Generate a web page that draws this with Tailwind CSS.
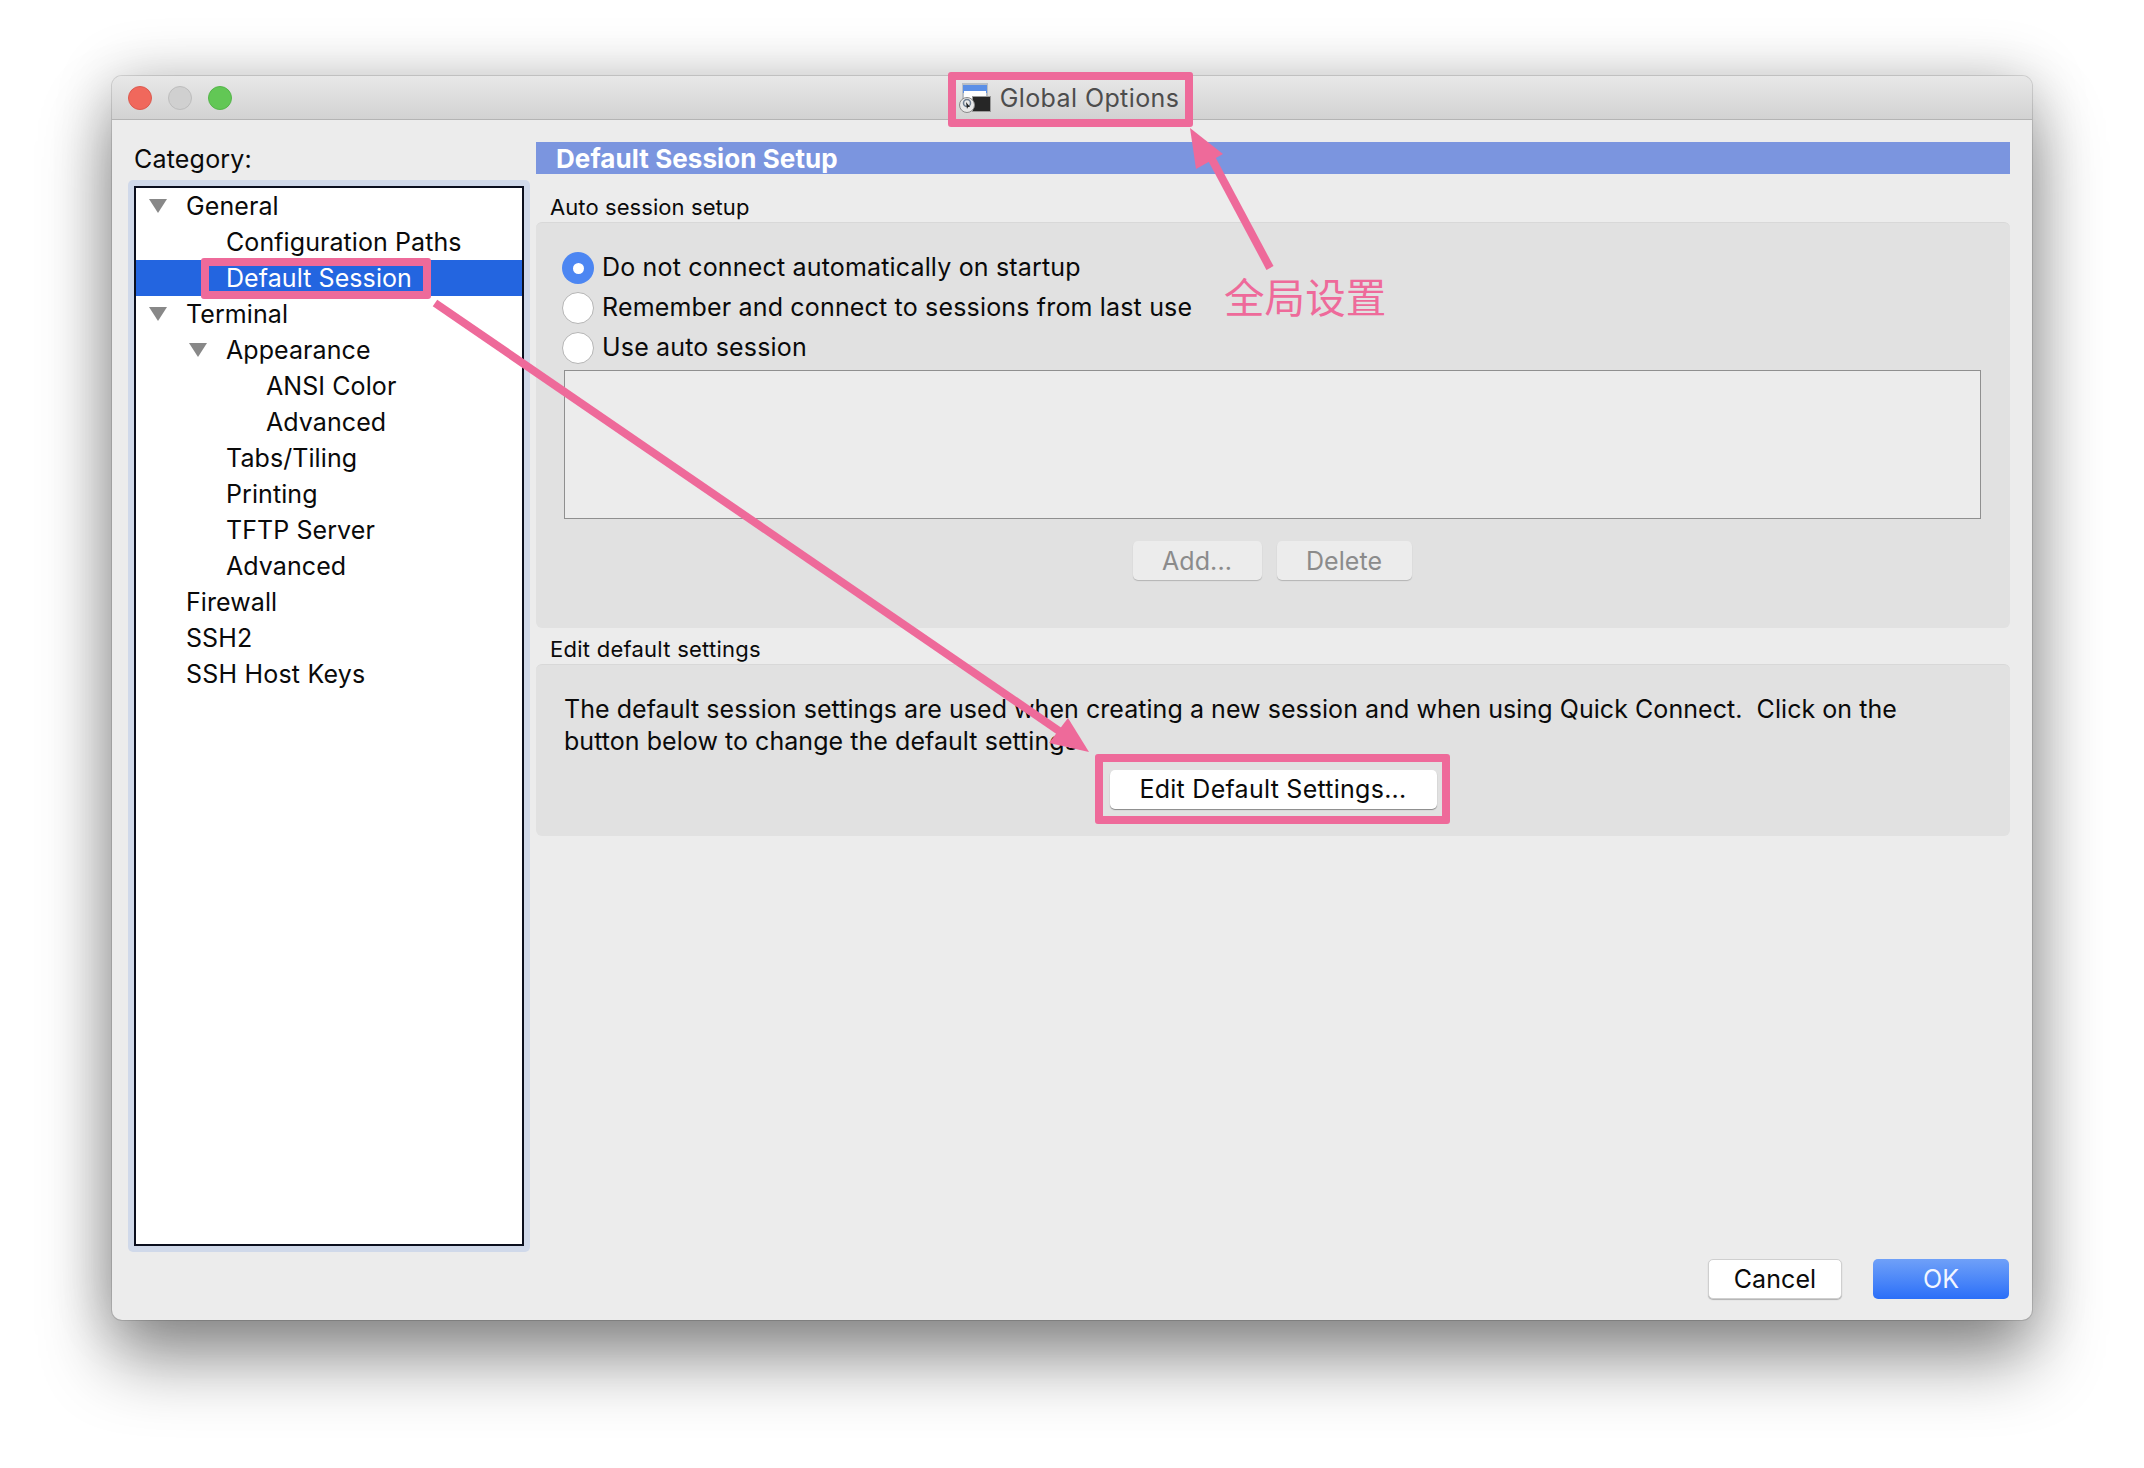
<!DOCTYPE html>
<html lang="en">
<head>
    <meta charset="UTF-8">
    <title>Global Options</title>
    <script src="https://cdn.jsdelivr.net/npm/@tailwindcss/browser@4"></script>
</head>
<body class="relative w-[2144px] h-[1468px] overflow-hidden bg-white font-[Inter,'Noto_Sans_CJK_SC',sans-serif] text-[25px] tracking-[0.08px] text-[#0a0a0a]">
    <div class="pt-[76px] pl-[112px]">
        <div class="flex flex-col w-[1920px] h-[1244px] rounded-[10px] bg-[#ececec] shadow-[0_40px_70px_rgba(0,0,0,0.42),0_0_0_1px_rgba(0,0,0,0.12),0_0_60px_rgba(0,0,0,0.2)]">
            <!-- title bar -->
            <div class="relative flex items-center justify-center h-[44px] rounded-t-[10px] bg-linear-to-b from-[#e8e8e8] to-[#d2d2d2] border-b border-[#b4b4b4]">
                <div class="absolute left-[16px] top-[10px] flex gap-[16px]">
                    <div class="w-[24px] h-[24px] rounded-full bg-[#f0685c] border border-[#dc5a4f]"></div>
                    <div class="w-[24px] h-[24px] rounded-full bg-[#d0d0d0] border border-[#bdbdbd]"></div>
                    <div class="w-[24px] h-[24px] rounded-full bg-[#62c755] border border-[#55b54a]"></div>
                </div>
                <div class="flex items-center gap-[9px] mr-[6px] tracking-[0.4px] text-[#4d4d4d]">
                    <svg width="32" height="32" viewBox="0 0 32 32">
                        <rect x="3" y="1" width="26" height="24" fill="#b9bfc6"/>
                        <rect x="4" y="3" width="24" height="8" fill="#5b8fe6"/>
                        <rect x="5" y="9" width="22" height="8" fill="#fff"/>
                        <rect x="13" y="14" width="19" height="16" fill="#9a9a9a"/>
                        <rect x="14" y="15" width="17" height="14" fill="#262626"/>
                        <circle cx="8" cy="23" r="7.5" fill="#e9e9e9" stroke="#8a8a8a" stroke-width="1"/>
                        <circle cx="8" cy="21" r="3.5" fill="none" stroke="#6f7f92" stroke-width="1.5"/>
                        <path d="M7 20l4 5-2 0-1 2z" fill="#222"/>
                    </svg>
                    <span class="translate-y-[1px]">Global Options</span>
                </div>
            </div>

            <div class="flex flex-1 min-h-0">
                <!-- category tree -->
                <div class="w-[424px] pl-[16px]">
                    <div class="flex items-center h-[60px] pl-[6px] pt-[19px] tracking-[0.2px]">Category:</div>
                    <div class="w-[402px] h-[1072px] p-[6px] rounded-[5px] bg-[#d0d9ea]">
                        <div class="h-full border-2 border-[#0b0f1e] bg-white">
                            <div class="flex items-center h-[36px] pl-[13px] pt-[2px]">
                                <svg class="w-[18px] h-[14px] mr-[19px] -translate-y-[1px]" viewBox="0 0 18 14"><polygon points="0,0 18,0 9,14" fill="#888"/></svg>General
                            </div>
                            <div class="flex items-center h-[36px] pl-[90px] pt-[2px]">Configuration Paths</div>
                            <div class="flex items-center h-[36px] pl-[90px] pt-[2px] bg-[#2365e0] text-white">Default Session</div>
                            <div class="flex items-center h-[36px] pl-[13px] pt-[2px]">
                                <svg class="w-[18px] h-[14px] mr-[19px] -translate-y-[1px]" viewBox="0 0 18 14"><polygon points="0,0 18,0 9,14" fill="#888"/></svg>Terminal
                            </div>
                            <div class="flex items-center h-[36px] pl-[53px] pt-[2px]">
                                <svg class="w-[18px] h-[14px] mr-[19px] -translate-y-[1px]" viewBox="0 0 18 14"><polygon points="0,0 18,0 9,14" fill="#888"/></svg>Appearance
                            </div>
                            <div class="flex items-center h-[36px] pl-[130px] pt-[2px]">ANSI Color</div>
                            <div class="flex items-center h-[36px] pl-[130px] pt-[2px]">Advanced</div>
                            <div class="flex items-center h-[36px] pl-[90px] pt-[2px]">Tabs/Tiling</div>
                            <div class="flex items-center h-[36px] pl-[90px] pt-[2px]">Printing</div>
                            <div class="flex items-center h-[36px] pl-[90px] pt-[2px]">TFTP Server</div>
                            <div class="flex items-center h-[36px] pl-[90px] pt-[2px]">Advanced</div>
                            <div class="flex items-center h-[36px] pl-[50px] pt-[2px]">Firewall</div>
                            <div class="flex items-center h-[36px] pl-[50px] pt-[2px]">SSH2</div>
                            <div class="flex items-center h-[36px] pl-[50px] pt-[2px] tracking-[0.2px]">SSH Host Keys</div>
                        </div>
                    </div>
                </div>

                <!-- settings panel -->
                <div class="flex flex-col w-[1474px] pt-[22px] pb-[21px]">
                    <div class="flex items-center h-[32px] pl-[20px] pt-[1px] bg-[#7b95df] text-white text-[26px] font-bold">Default Session Setup</div>

                    <div class="flex items-center h-[48px] pt-[18px] pl-[14px] text-[22px]">Auto session setup</div>
                    <div class="h-[406px] pt-[25px] pl-[26px] pr-[29px] rounded-[6px] bg-[#e1e1e1] border-t border-[#d8d8d8]">
                        <div class="flex items-center gap-[8px] h-[40px] tracking-[0.17px]">
                            <div class="flex items-center justify-center w-[32px] h-[32px] rounded-full bg-[#4c86f2]"><div class="w-[11px] h-[11px] rounded-full bg-white"></div></div>
                            Do not connect automatically on startup
                        </div>
                        <div class="flex items-center gap-[8px] h-[40px] tracking-[0.17px]">
                            <div class="w-[32px] h-[32px] rounded-full bg-white border border-[#b5b5b5]"></div>
                            Remember and connect to sessions from last use
                        </div>
                        <div class="flex items-center gap-[8px] h-[40px] tracking-[0.17px]">
                            <div class="w-[32px] h-[32px] rounded-full bg-white border border-[#b5b5b5]"></div>
                            Use auto session
                        </div>
                        <div class="h-[149px] mt-[2px] ml-[2px] border border-[#8f8f8f] bg-[#ececec]"></div>
                        <div class="flex justify-center gap-[15px] mt-[22px] ml-[1px] text-[#8b8b8b]">
                            <div class="flex items-center justify-center w-[129px] h-[39px] pt-[2px] rounded-[5px] bg-[#ececec] shadow-[0_1px_1px_rgba(0,0,0,0.2)]">Add...</div>
                            <div class="flex items-center justify-center w-[135px] h-[39px] pt-[2px] rounded-[5px] bg-[#ececec] shadow-[0_1px_1px_rgba(0,0,0,0.2)]">Delete</div>
                        </div>
                    </div>

                    <div class="flex items-center h-[36px] pt-[6px] pl-[14px] text-[22px] tracking-[0.25px]">Edit default settings</div>
                    <div class="h-[172px] pt-[28px] pl-[28px] rounded-[6px] bg-[#e1e1e1] border-t border-[#d8d8d8]">
                        <p class="leading-[32px] whitespace-pre tracking-[0.05px]">The default session settings are used when creating a new session and when using Quick Connect.  Click on the
button below to change the default settings.</p>
                        <div class="flex justify-center pr-[28px] mt-[13px]">
                            <div class="flex items-center justify-center w-[327px] h-[39px] rounded-[5px] bg-white tracking-[0.26px] shadow-[0_1px_1px_rgba(0,0,0,0.4)]">Edit Default Settings...</div>
                        </div>
                    </div>

                    <div class="flex justify-end gap-[31px] mt-auto pr-[1px]">
                        <div class="flex items-center justify-center w-[134px] h-[40px] pt-[2px] rounded-[5px] bg-white border border-[#cfcfcf] shadow-[0_1px_1px_rgba(0,0,0,0.25)]">Cancel</div>
                        <div class="flex items-center justify-center w-[136px] h-[40px] pt-[2px] rounded-[5px] bg-linear-to-b from-[#6fa0f8] to-[#2a6ef8] text-[#f2f6ff]">OK</div>
                    </div>
                </div>
            </div>
        </div>
    </div>

    <!-- annotations drawn over the dialog -->
    <div class="absolute left-[948px] top-[72px] w-[245px] h-[55px] rounded-[3px] border-[8px] border-[#ee6a9a]"></div>
    <div class="absolute left-[201px] top-[258px] w-[230px] h-[41px] rounded-[3px] border-[8px] border-[#ee6a9a]"></div>
    <div class="absolute left-[1095px] top-[754px] w-[355px] h-[70px] rounded-[3px] border-[8px] border-[#ee6a9a]"></div>
    <div class="absolute left-[1224px] top-[270px] text-[40.5px] leading-[52px] text-[#ee6a9a] font-['Noto_Sans_CJK_SC',sans-serif] font-normal">全局设置</div>
    <svg class="absolute left-0 top-0 w-[2144px] h-[1468px]" viewBox="0 0 2144 1468">
        <line x1="1270" y1="268" x2="1207" y2="150" stroke="#ee6a9a" stroke-width="8"/>
        <polygon points="1190,128 1223,154 1196,169" fill="#ee6a9a"/>
        <line x1="435" y1="303" x2="1062" y2="733" stroke="#ee6a9a" stroke-width="8"/>
        <polygon points="1089,752 1049,743 1068,718" fill="#ee6a9a"/>
    </svg>
</body>
</html>
